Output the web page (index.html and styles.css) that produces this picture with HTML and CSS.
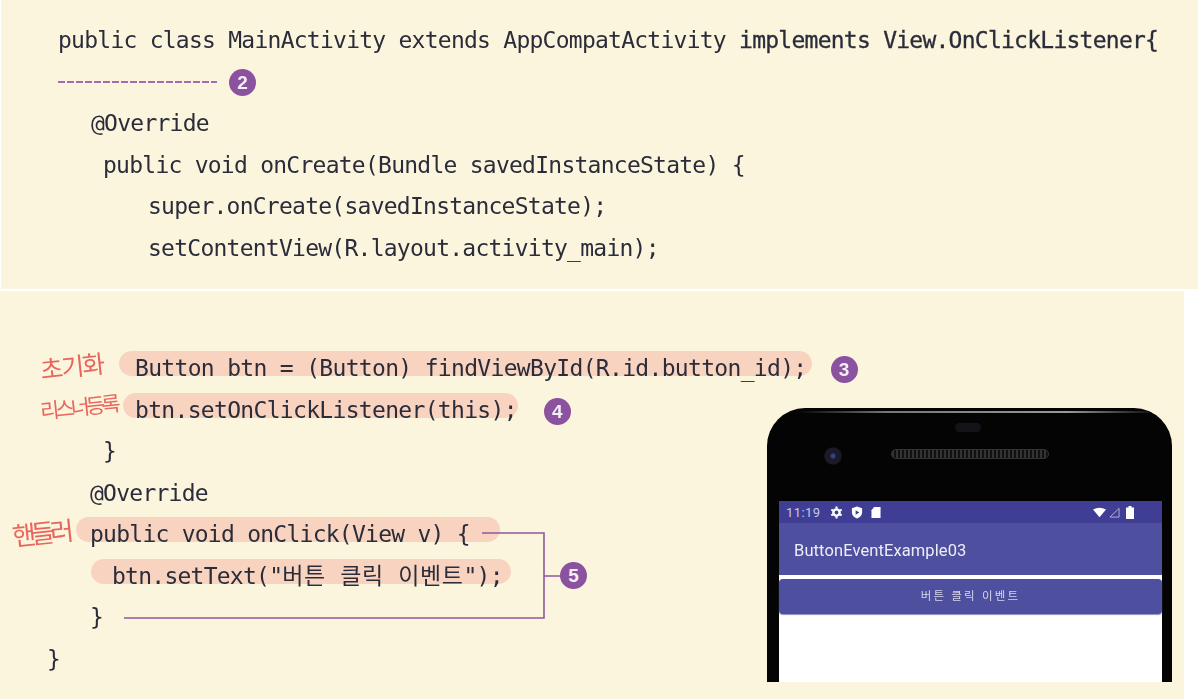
FILE: index.html
```html
<!DOCTYPE html>
<html lang="ko">
<head>
<meta charset="utf-8">
<title>ButtonEventExample03</title>
<link rel="stylesheet" href="styles.css">
</head>
<body>
<main class="page">
  <section class="panel panel-top">
    <div class="line in-0">public class MainActivity extends AppCompatActivity <b>implements View.OnClickListener{</b></div>
    <div class="line in-0 rule-row"><span class="dashes"></span><span class="badge">2</span></div>
    <div class="line in-1">@Override</div>
    <div class="line in-2">public void onCreate(Bundle savedInstanceState) {</div>
    <div class="line in-3">super.onCreate(savedInstanceState);</div>
    <div class="line in-3">setContentView(R.layout.activity_main);</div>
  </section>
  <section class="panel panel-bottom">
    <div class="line in-4">
      <span class="note note-init">초기화</span>
      <span class="hl hl-a">Button btn = (Button) findViewById(R.id.button_id);</span><span class="badge badge-a">3</span>
    </div>
    <div class="line in-4">
      <span class="note note-listen">리스너등록</span>
      <span class="hl hl-b">btn.setOnClickListener(this);</span><span class="badge badge-b">4</span>
    </div>
    <div class="line in-5">}</div>
    <div class="line in-1">@Override</div>
    <div class="line in-1">
      <span class="note note-handle">핸들러</span>
      <span class="hl hl-c">public void onClick(View v) {</span>
    </div>
    <div class="line in-6"><span class="hl hl-d">btn.setText("<span class="ko">버튼 클릭 이벤트</span>");</span></div>
    <div class="line in-1b">}</div>
    <div class="line in-7">}</div>

    <svg class="bracket" width="440" height="90" viewBox="0 0 440 90" aria-hidden="true">
      <path d="M358 1H420V86H0M420 44H440" fill="none" stroke="#8b5a9c" stroke-width="1.6"/>
    </svg>
    <span class="badge badge-e">5</span>

    <div class="phone">
      <div class="bezel">
        <span class="glint"></span>
        <span class="earpiece"></span>
        <span class="camera"></span>
        <span class="speaker"></span>
      </div>
      <div class="screen">
        <div class="status">
          <span class="clock">11:19</span>
          <svg class="st-gear" width="13" height="13" viewBox="0 0 14 14"><circle cx="7" cy="7" r="3.4" fill="none" stroke="#fff" stroke-width="2.6"/><path d="M7 .5v2.500M7 11v2.500M1.400 3.800l2.100 1.200M10.500 9l2.100 1.200M1.400 10.200l2.100-1.200M10.500 5l2.100-1.200" stroke="#fff" stroke-width="2.200"/></svg>
          <svg class="st-shield" width="12" height="13" viewBox="0 0 12 14"><path d="M6 .5l5.500 2v4.500c0 3-2.500 5.500-5.500 6.500C3 12.500.5 10 .5 7V2.500z" fill="#fff"/><path d="M4.500 4.500l4 2.500-4 2.500z" fill="#3f3d94"/></svg>
          <svg class="st-card" width="10" height="13" viewBox="0 0 11 14"><path d="M3.500 1H10.500V13H.5V4.500z" fill="#fff"/></svg>
          <span class="status-gap"></span>
          <svg class="st-wifi" width="13" height="11" viewBox="0 0 15 12"><path d="M0 2.500Q7.500-1.500 15 2.500L7.500 11.500z" fill="#fff"/></svg>
          <svg class="st-signal" width="11" height="11" viewBox="0 0 12 12"><path d="M11 1.500V11H1z" fill="none" stroke="#b9b8dc" stroke-width="1"/></svg>
          <svg class="st-batt" width="8" height="13" viewBox="0 0 8 13"><path d="M2.500 0h3v1.500H8V13H0V1.500h2.500z" fill="#fff"/></svg>
        </div>
        <div class="appbar">ButtonEventExample03</div>
        <div class="button">버튼 클릭 이벤트</div>
      </div>
    </div>
  </section>
</main>
</body>
</html>
```
FILE: styles.css
```css
* { box-sizing: border-box; }
html, body { margin: 0; height: 100%; background: #fff; overflow: hidden; }
.page {
  width: 1203px;
  height: 699px;
  display: flex;
  flex-direction: column;
  gap: 2px;
  font-family: "DejaVu Sans Mono", "Noto Sans CJK KR", monospace;
  font-size: 23px;
  letter-spacing: -.75px;
  color: #2a2c3a;
}
.panel { background: #fcf5dd; }
.panel-top { margin-left: 1px; width: 1197px; height: 289px; padding-top: 20px; }
.panel-bottom { position: relative; width: 1184px; height: 408px; padding-top: 57px; }
.line {
  height: 41.500px;
  line-height: 41.500px;
  white-space: nowrap;
  position: relative;
  filter: blur(.35px);
}
.line b { font-weight: 400; -webkit-text-stroke: .3px #2a2c3a; }
.in-0 { padding-left: 57px; }
.in-1 { padding-left: 90px; }
.in-1b { padding-left: 90px; }
.in-2 { padding-left: 102px; }
.in-3 { padding-left: 147px; }
.in-4 { padding-left: 135px; }
.in-5 { padding-left: 103px; }
.in-6 { padding-left: 112px; }
.in-7 { padding-left: 47px; }

.rule-row { display: flex; align-items: center; gap: 12px; }
.dashes {
  width: 159px;
  height: 2px;
  background: repeating-linear-gradient(90deg, #a56cb4 0 7px, transparent 7px 9px);
}
.badge {
  display: inline-flex;
  align-items: center;
  justify-content: center;
  width: 27px;
  height: 27px;
  border-radius: 50%;
  background: #8b529f;
  color: #f4edf6;
  font: 700 19px/1 "Liberation Sans", sans-serif;
  letter-spacing: 0;
  vertical-align: middle;
}
.badge-a { margin-left: 19px; }
.badge-b { margin-left: 26px; }
.badge-e { position: absolute; left: 560px; top: 271px; }

.hl {
  display: inline-block;
  height: 25px;
  line-height: 35px;
  border-radius: 12.500px;
  background: #f8d4c0;
  vertical-align: 0;
}
.hl-a { margin-left: -16px; padding: 0 5px 0 16px; letter-spacing: -.68px; }
.hl-b { margin-left: -12px; padding: 0 1px 0 12px; letter-spacing: -.68px; }
.hl-c { margin-left: -14px; padding: 0 30px 0 14px; }
.hl-d { margin-left: -21px; padding: 0 8px 0 21px; }
.ko { letter-spacing: .6px; }

.note {
  position: absolute;
  font-family: "Noto Sans CJK KR", sans-serif;
  color: #e9665e;
  font-weight: 400;
  transform: rotate(-6deg);
  white-space: nowrap;
  line-height: 1;
}
.note-init { left: 40px; top: 5px; font-size: 25px; letter-spacing: -2px; }
.note-listen { left: 40px; top: 6px; font-size: 21px; letter-spacing: -4px; }
.note-handle { left: 12px; top: 5px; font-size: 26px; letter-spacing: -5px; }

.bracket { position: absolute; left: 124px; top: 241px; }

.phone {
  position: absolute;
  left: 767px;
  top: 117px;
  width: 405px;
  height: 274px;
  border-radius: 38px 38px 0 0;
  background: #050405;
  overflow: hidden;
}
.bezel { position: relative; height: 93px; }
.glint {
  position: absolute;
  left: 30px;
  right: 14px;
  top: 3px;
  height: 2px;
  background: linear-gradient(90deg, #050405, #777 25%, #999 75%, #050405);
}
.earpiece {
  position: absolute;
  left: 188px;
  top: 15px;
  width: 26px;
  height: 9px;
  border-radius: 5px;
  background: #13131a;
}
.camera {
  position: absolute;
  left: 57px;
  top: 39px;
  width: 18px;
  height: 18px;
  border-radius: 50%;
  background: radial-gradient(circle, #34427e 0 2px, #1a1a28 3px 8px, #0a0a10 9px);
}
.speaker {
  position: absolute;
  left: 124px;
  top: 41px;
  width: 158px;
  height: 10px;
  border-radius: 5px;
  border: 1px solid #333;
  background: repeating-linear-gradient(90deg, #333 0 2px, #111 2px 4px);
}
.screen {
  margin: 0 10px 0 12px;
  height: 181px;
  background: #fff;
  display: flex;
  flex-direction: column;
  font-family: "Roboto", "Noto Sans CJK KR", sans-serif;
  letter-spacing: 0;
  filter: blur(.3px);
}
.status {
  height: 22px;
  background: #3f3d94;
  display: flex;
  align-items: center;
  padding: 0 28px 0 7px;
  color: #c9c8e4;
  font-size: 13px;
}
.clock { margin-right: 10px; letter-spacing: .4px; }
.st-gear { margin-right: 8px; }
.st-shield { margin-right: 8px; }
.status-gap { flex: 1; }
.status svg { flex: none; }
.st-wifi { margin-right: 3px; }
.st-signal { margin-right: 6px; }
.appbar {
  height: 52px;
  background: #4f4f9f;
  color: #eeedf6;
  font-size: 16.500px;
  line-height: 55px;
  padding-left: 15px;
  letter-spacing: .1px;
}
.button {
  margin-top: 4px;
  height: 35px;
  background: #4f4f9f;
  border-radius: 4px;
  color: #d6d5ea;
  font-size: 11.500px;
  line-height: 35px;
  text-align: center;
  letter-spacing: 2.200px;
  box-shadow: 0 1px 1px #8f8fc4;
}
```
